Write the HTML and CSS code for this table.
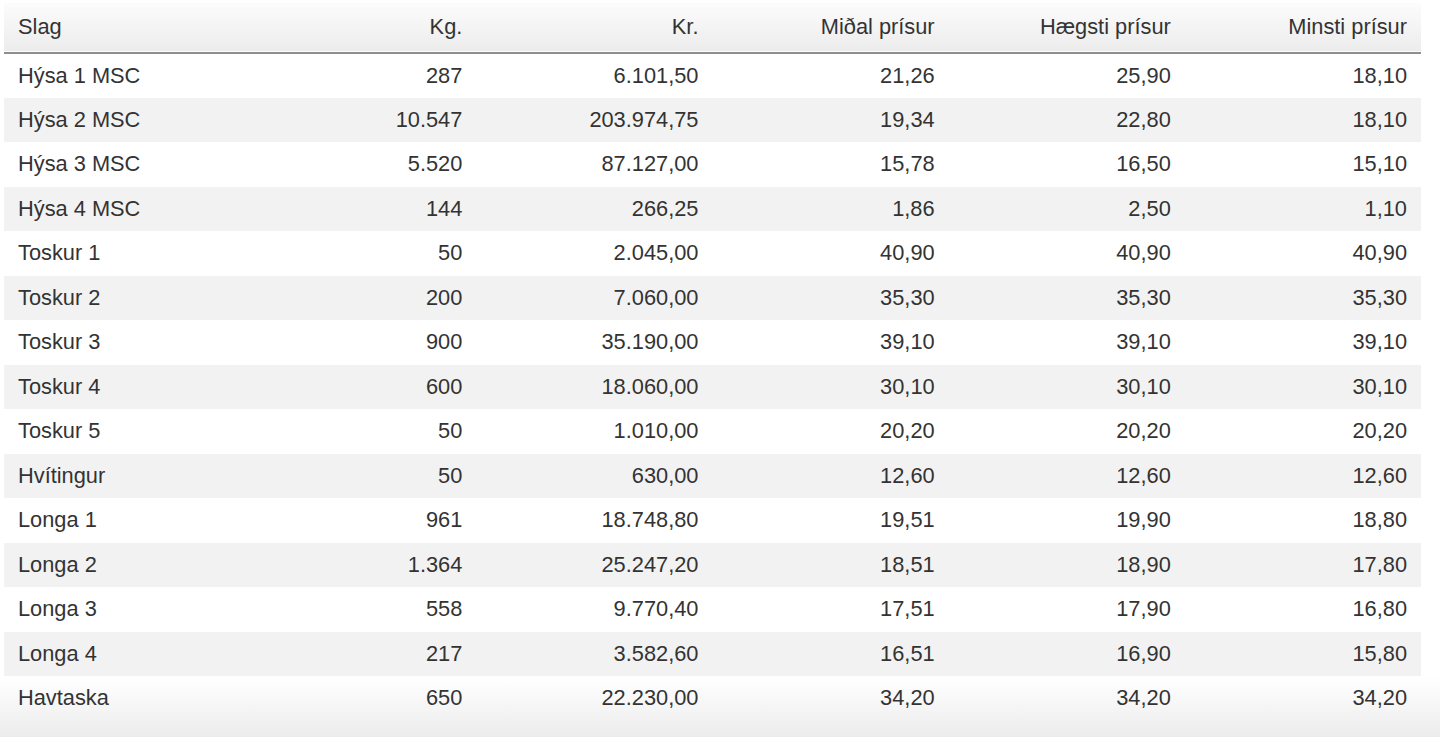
FILE: index.html
```html
<!DOCTYPE html>
<html lang="fo">
<head>
<meta charset="utf-8">
<title>Prísir</title>
<link rel="stylesheet" href="styles.css">
</head>
<body>
<div class="fade"></div>
<div class="wrap">
<table class="prices">
<thead>
<tr><th class="name">Slag</th><th>Kg.</th><th>Kr.</th><th>Miðal prísur</th><th>Hægsti prísur</th><th>Minsti prísur</th></tr>
</thead>
<tbody>
<tr><td class="name">Hýsa 1 MSC</td><td>287</td><td>6.101,50</td><td>21,26</td><td>25,90</td><td>18,10</td></tr>
<tr><td class="name">Hýsa 2 MSC</td><td>10.547</td><td>203.974,75</td><td>19,34</td><td>22,80</td><td>18,10</td></tr>
<tr><td class="name">Hýsa 3 MSC</td><td>5.520</td><td>87.127,00</td><td>15,78</td><td>16,50</td><td>15,10</td></tr>
<tr><td class="name">Hýsa 4 MSC</td><td>144</td><td>266,25</td><td>1,86</td><td>2,50</td><td>1,10</td></tr>
<tr><td class="name">Toskur 1</td><td>50</td><td>2.045,00</td><td>40,90</td><td>40,90</td><td>40,90</td></tr>
<tr><td class="name">Toskur 2</td><td>200</td><td>7.060,00</td><td>35,30</td><td>35,30</td><td>35,30</td></tr>
<tr><td class="name">Toskur 3</td><td>900</td><td>35.190,00</td><td>39,10</td><td>39,10</td><td>39,10</td></tr>
<tr><td class="name">Toskur 4</td><td>600</td><td>18.060,00</td><td>30,10</td><td>30,10</td><td>30,10</td></tr>
<tr><td class="name">Toskur 5</td><td>50</td><td>1.010,00</td><td>20,20</td><td>20,20</td><td>20,20</td></tr>
<tr><td class="name">Hvítingur</td><td>50</td><td>630,00</td><td>12,60</td><td>12,60</td><td>12,60</td></tr>
<tr><td class="name">Longa 1</td><td>961</td><td>18.748,80</td><td>19,51</td><td>19,90</td><td>18,80</td></tr>
<tr><td class="name">Longa 2</td><td>1.364</td><td>25.247,20</td><td>18,51</td><td>18,90</td><td>17,80</td></tr>
<tr><td class="name">Longa 3</td><td>558</td><td>9.770,40</td><td>17,51</td><td>17,90</td><td>16,80</td></tr>
<tr><td class="name">Longa 4</td><td>217</td><td>3.582,60</td><td>16,51</td><td>16,90</td><td>15,80</td></tr>
<tr><td class="name">Havtaska</td><td>650</td><td>22.230,00</td><td>34,20</td><td>34,20</td><td>34,20</td></tr>
</tbody>
</table>
</div>
</body>
</html>
```
FILE: styles.css
```css
html, body {
  margin: 0;
  padding: 0;
  background: #ffffff;
}
body {
  font-family: "Liberation Sans", Arial, Helvetica, sans-serif;
  color: #333333;
  overflow: hidden;
  height: 737px;
  position: relative;
}
.wrap {
  position: relative;
  z-index: 1;
  padding: 3px 19px 0 4px;
}
.prices {
  width: 100%;
  border-collapse: collapse;
  table-layout: fixed;
  font-size: 21.8px;
}
.prices th,
.prices td {
  text-align: right;
  padding: 0 14px;
  font-weight: normal;
  white-space: nowrap;
}
.prices th.name,
.prices td.name {
  text-align: left;
}
.prices thead tr {
  height: 50px;
  background: linear-gradient(to bottom, #fcfcfc 0%, #ececec 100%);
  border-bottom: 2px solid #8e8e8e;
}
.prices thead th {
  padding-bottom: 2px;
}
.prices tbody tr {
  height: 44.5px;
}
.prices tbody tr:nth-child(even) {
  background: #f2f2f2;
}
.fade {
  position: absolute;
  left: 0;
  right: 0;
  bottom: 0;
  height: 60px;
  z-index: 0;
  background: linear-gradient(to bottom, #ffffff 0%, #ececec 100%);
}
```
